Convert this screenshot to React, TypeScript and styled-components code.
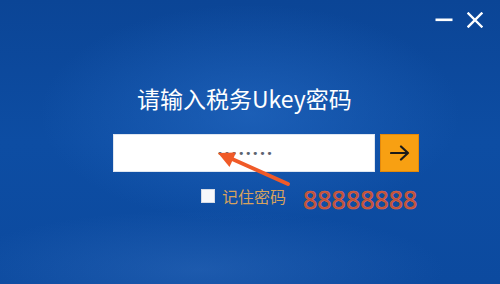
import React from "react";
import styled, { createGlobalStyle } from "styled-components";

const Global = createGlobalStyle`
  html, body { margin: 0; padding: 0; }
  body { width: 500px; height: 284px; overflow: hidden; font-family: "Noto Sans CJK SC", "Noto Sans", sans-serif; }
`;

const Window = styled.div`
  position: relative;
  width: 500px;
  height: 284px;
  box-sizing: border-box;
  display: flex;
  flex-direction: column;
  overflow: hidden;
  background:
    radial-gradient(ellipse 60% 55% at 50% 40%, rgba(40, 110, 200, 0.55), rgba(40, 110, 200, 0) 70%),
    radial-gradient(ellipse 70% 30% at 40% 95%, rgba(60, 120, 200, 0.35), rgba(60, 120, 200, 0) 70%),
    linear-gradient(180deg, #0b4596 0%, #0d4da3 50%, #0c4a9f 100%);
`;

const TitleBar = styled.div`
  display: flex;
  justify-content: flex-end;
  align-items: center;
  gap: 13px;
  height: 40px;
  padding: 0 16px 0 0;
`;

const WinButton = styled.button`
  width: 18px;
  height: 18px;
  padding: 0;
  border: 0;
  background: transparent;
  display: flex;
  align-items: center;
  justify-content: center;
  cursor: pointer;
`;

const Form = styled.div`
  display: flex;
  flex-direction: column;
  width: 306px;
  margin: 43px 0 0 113px;
`;

const Heading = styled.h1`
  margin: 0 0 0 24px;
  font-size: 23px;
  line-height: 30px;
  font-weight: 400;
  color: #ffffff;
  white-space: nowrap;
`;

const InputRow = styled.div`
  display: flex;
  gap: 5px;
  margin-top: 21px;
  height: 38px;
`;

const Field = styled.div`
  flex: 0 0 262px;
  background: #ffffff;
  box-shadow: inset 0 0 0 1px #dfe6f0;
  display: flex;
  align-items: center;
  justify-content: center;
`;

const Dots = styled.span`
  font-family: "DejaVu Sans", sans-serif;
  font-size: 11px;
  letter-spacing: 0.6px;
  color: #5c6470;
  margin-left: 2px;
`;

const Go = styled.button`
  flex: 0 0 39px;
  padding: 0;
  border: 1px solid #e4890a;
  background: #f8a012;
  display: flex;
  align-items: center;
  justify-content: center;
  cursor: pointer;
`;

const RememberRow = styled.div`
  display: flex;
  align-items: center;
  margin-top: 11px;
  margin-left: 88px;
  height: 26px;
`;

const Check = styled.span`
  width: 14px;
  height: 14px;
  background: #f7f8fb;
  border: 1px solid #d5dbe6;
  box-sizing: border-box;
  margin-right: 7px;
`;

const RememberLabel = styled.span`
  font-size: 16px;
  color: #d6a25e;
  letter-spacing: 0;
  white-space: nowrap;
`;

const Code = styled.span`
  margin: 5px 0 0 17px;
  font-family: "Noto Sans", sans-serif;
  font-size: 25px;
  line-height: 26px;
  color: #b9503c;
  -webkit-text-stroke: 0.5px #ee6a3c;
  letter-spacing: 0;
`;

const Annotation = styled.svg`
  position: absolute;
  left: 0;
  top: 0;
  pointer-events: none;
`;

export default function App() {
  return (
    <>
      <Global />
      <Window>
        <TitleBar>
          <WinButton aria-label="最小化">
            <svg width="18" height="18" viewBox="0 0 18 18">
              <rect x="0.5" y="7.5" width="17" height="2.6" fill="#fff" />
            </svg>
          </WinButton>
          <WinButton aria-label="关闭">
            <svg width="16" height="16" viewBox="0 0 16 16">
              <path d="M1.5 1.5 L14.5 14.5 M14.5 1.5 L1.5 14.5" stroke="#fff" strokeWidth="2.4" strokeLinecap="square" />
            </svg>
          </WinButton>
        </TitleBar>
        <Form>
          <Heading>请输入税务Ukey密码</Heading>
          <InputRow>
            <Field>
              <Dots>••••••••</Dots>
            </Field>
            <Go aria-label="登录">
              <svg width="20" height="16" viewBox="0 0 20 16">
                <path d="M1 8 H18 M11 1.5 L18 8 L11 14.5" stroke="#1a1a1a" strokeWidth="2.2" fill="none" strokeLinecap="round" strokeLinejoin="round" />
              </svg>
            </Go>
          </InputRow>
          <RememberRow>
            <Check />
            <RememberLabel>记住密码</RememberLabel>
            <Code>88888888</Code>
          </RememberRow>
        </Form>
        <Annotation width="500" height="284" viewBox="0 0 500 284">
          <path d="M288 184 L231 158.5" stroke="#f05a28" strokeWidth="4" strokeLinecap="round" />
          <polygon points="218,153 236,152.5 229.5,167" fill="#f05a28" />
        </Annotation>
      </Window>
    </>
  );
}
